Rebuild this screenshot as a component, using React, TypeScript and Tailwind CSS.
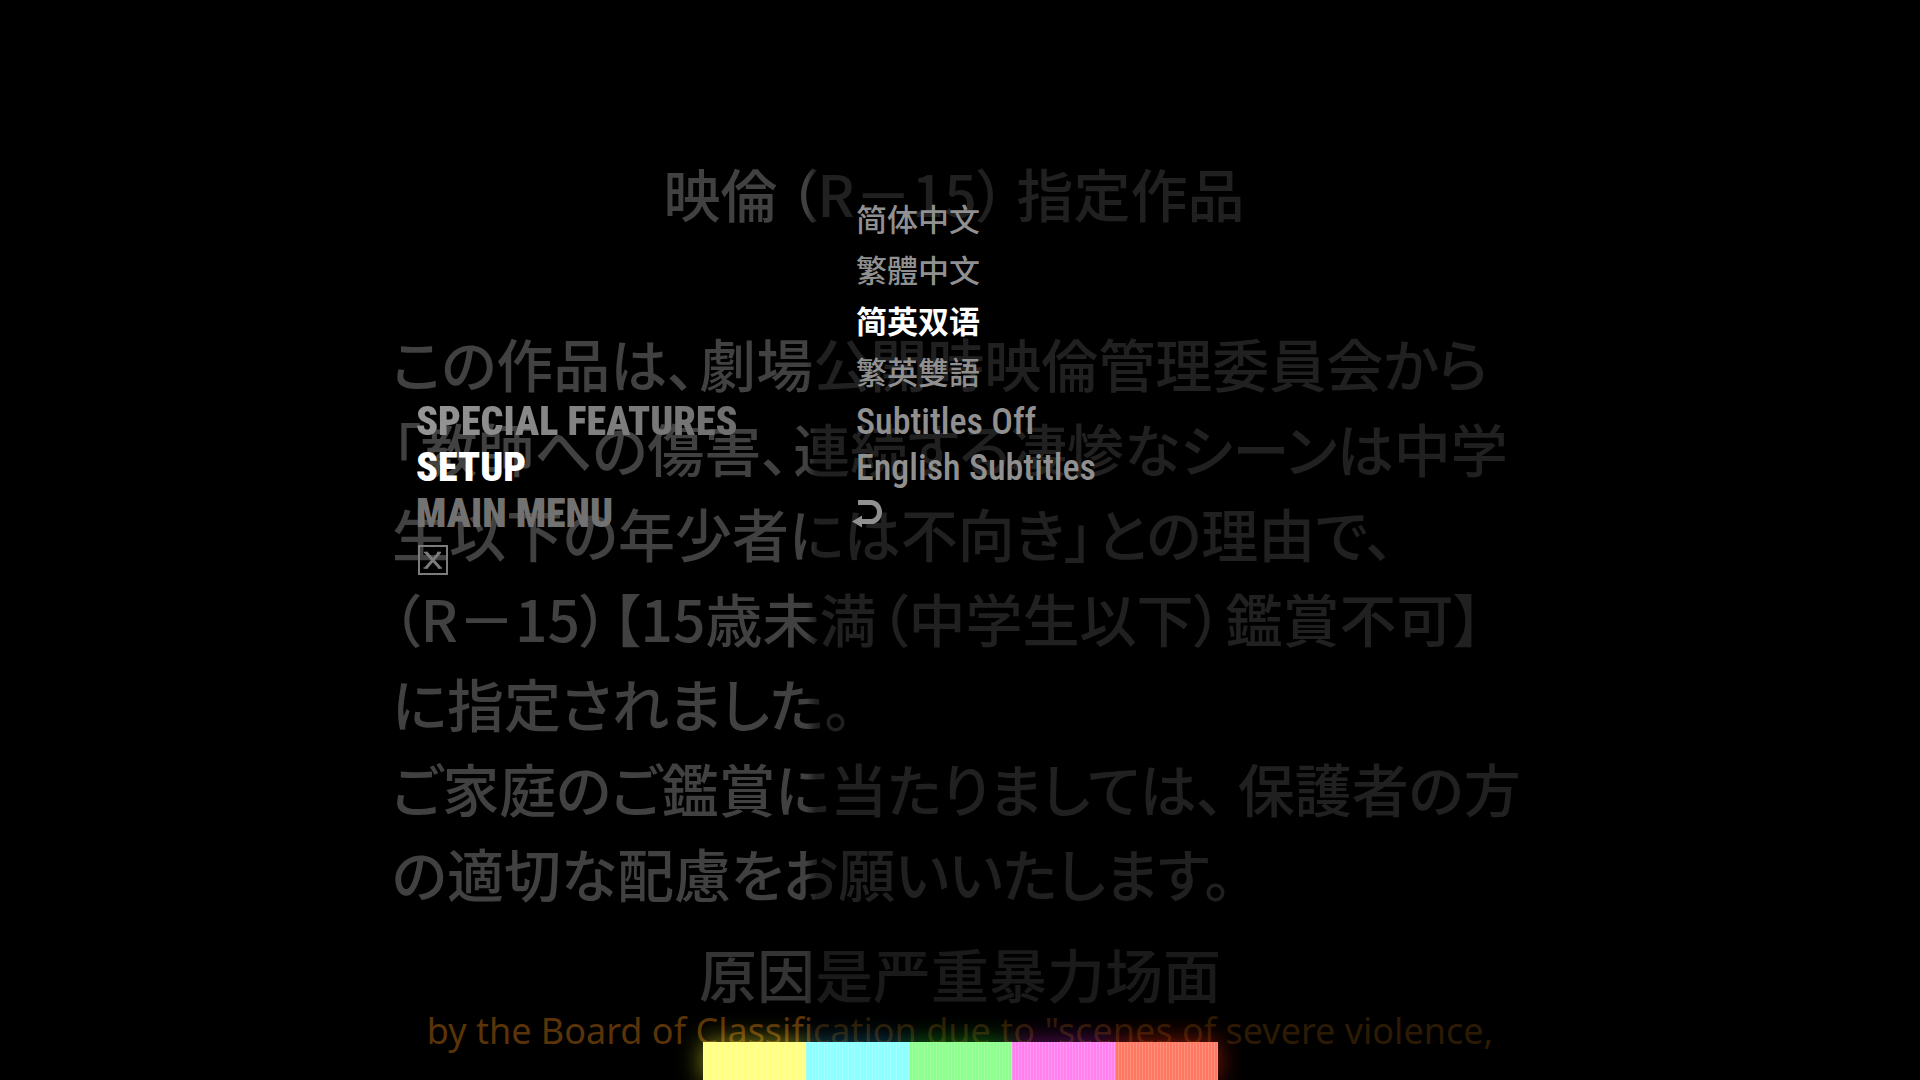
const noticeLines = [
  "この作品は、\u200a劇場公開時映倫管理委員会から",
  "「教師への傷害、\u200a連続する凄惨なシーンは中学",
  "生以下の年少者には不向き」\u200aとの理由で、",
  "（R－15）\u200a【15歳未満\u200a（中学生以下）\u200a鑑賞不可】",
  "に指定されました。",
  "ご家庭のご鑑賞に当たりましては、 保護者の方",
  "の適切な配慮をお願いいたします。",
];

const languages = [
  { label: "简体中文", lang: "zh-Hans", active: false },
  { label: "繁體中文", lang: "zh-Hant", active: false },
  { label: "简英双语", lang: "zh-Hans", active: true },
  { label: "繁英雙語", lang: "zh-Hant", active: false },
];

const bars = [
  { fill: "bg-[#ffff80]", glow: "shadow-[0_0_24px_#ffff3090]" },
  { fill: "bg-[#8cffff]", glow: "shadow-[0_0_24px_#30c8ff60]" },
  { fill: "bg-[#8cff8c]", glow: "shadow-[0_0_24px_#30ff3070]" },
  { fill: "bg-[#ff80ee]", glow: "shadow-[0_0_24px_#ff30ff60]" },
  { fill: "bg-[#ff7862]", glow: "shadow-[0_0_24px_#ff301090]" },
];

function Notice() {
  return (
    <section className="col-start-1 row-start-1 flex flex-col items-center whitespace-nowrap">
      <div
        lang="ja"
        className="w-full max-w-[1136px] text-[57px] leading-[85px] font-medium text-[#414141] [font-family:'Noto_Sans_CJK_JP',sans-serif] [font-feature-settings:'palt']"
      >
        <h1 className="pt-[150px] pr-3 text-center">映倫{"\u2009"}（R－15）{"\u2009"}指定作品</h1>
        <div className="pt-[85px]">
          {noticeLines.map((line) => (
            <p key={line}>{line}</p>
          ))}
        </div>
      </div>
      <p
        lang="zh-Hans"
        className="pt-[18px] text-[58px] leading-[80px] font-medium text-[#343434] [font-family:'Noto_Sans_CJK_SC',sans-serif]"
      >
        原因是严重暴力场面
      </p>
      <p className="pt-1 text-[36px] leading-[28px] text-[#5a3408] [font-family:'Noto_Sans',sans-serif]">
        by the Board of Classification due to "scenes of severe violence,
      </p>
    </section>
  );
}

function Menu() {
  return (
    <nav
      aria-label="Disc menu"
      className="col-start-1 row-start-1 mx-auto flex w-full max-w-[1088px] pt-48 [font-family:'Roboto_Condensed',sans-serif] [text-shadow:0_0_6px_rgb(0_0_0/60%)]"
    >
      <ul className="w-[440px] pt-[207px] text-[40px] leading-[46px] font-black">
        <li>
          <button className="bg-linear-to-r from-[#969696] to-[#6e6e6e] bg-clip-text text-transparent [text-shadow:none]">
            SPECIAL FEATURES
          </button>
        </li>
        <li>
          <button className="text-white">SETUP</button>
        </li>
        <li>
          <button className="text-[#727272]">MAIN MENU</button>
        </li>
        <li className="flex h-[46px] items-center">
          <button aria-label="Close" className="text-[#7c7c7c]">
            <svg width="34" height="32" viewBox="0 0 34 32" fill="none" stroke="currentColor">
              <rect x="3" y="2" width="28" height="28" strokeWidth="2" />
              <path d="M10 8.500 24 24M23.500 8.500 10 24" strokeWidth="3" />
              <path d="M8 8.500h4M21 8.500h4M7.500 24h4M22 24h4" strokeWidth="1.500" />
            </svg>
          </button>
        </li>
      </ul>
      <ul className="text-[#909090]">
        {languages.map((item) => (
          <li
            key={item.label}
            lang={item.lang}
            className="text-[31px] leading-[51px] font-medium [font-family:'Noto_Sans_CJK_SC',sans-serif]"
          >
            <button className={item.active ? "font-bold text-white" : ""}>{item.label}</button>
          </li>
        ))}
        <li className="pt-[3px] text-[36px] leading-[46px] font-medium">
          <button>Subtitles Off</button>
        </li>
        <li className="text-[36px] leading-[46px] font-medium">
          <button>English Subtitles</button>
        </li>
        <li className="flex h-[46px] items-center">
          <button aria-label="Back" className="-ml-1">
            <svg width="32" height="28" viewBox="0 0 32 28" fill="none">
              <path d="M6 2.500H19a8.500 9.500 0 0 1 0 19H9" stroke="currentColor" strokeWidth="5" />
              <path d="M0 21.500 10 15.500V27.500Z" fill="currentColor" />
            </svg>
          </button>
        </li>
      </ul>
    </nav>
  );
}

export default function App() {
  return (
    <main className="grid h-screen grid-cols-1 grid-rows-[100%] overflow-hidden bg-black text-white">
      <Notice />
      <div className="col-start-1 row-start-1 bg-[linear-gradient(90deg,transparent_42%,rgb(0_0_0/50%)_42.500%)]" />
      <Menu />
      <div className="col-start-1 row-start-1 mx-auto flex h-[38px] w-full max-w-[515px] self-end">
        {bars.map((bar) => (
          <div key={bar.glow} className={`flex-1 ${bar.glow}`} />
        ))}
      </div>
      <div className="col-start-1 row-start-1 mx-auto flex h-[38px] w-full max-w-[515px] self-end">
        {bars.map((bar) => (
          <div key={bar.fill} className={`flex-1 ${bar.fill}`}>
            <div className="h-full bg-[repeating-linear-gradient(90deg,rgb(255_255_255/18%)_0_1px,transparent_1px_3px)]" />
          </div>
        ))}
      </div>
    </main>
  );
}
